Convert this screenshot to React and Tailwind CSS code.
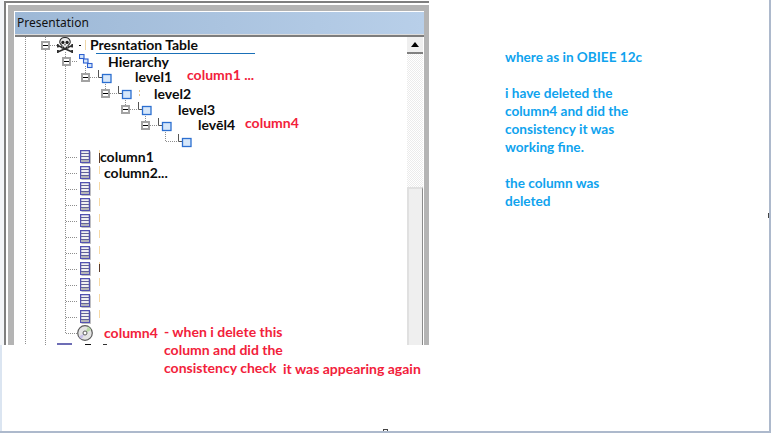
const RED = "text-[#f2213b]";

function Expander() {
  return (
    <span className="flex h-[9px] w-[9px] shrink-0 items-center justify-center border-2 border-[#a3a3a3] bg-white">
      <span className="h-px w-[5px] bg-black" />
    </span>
  );
}

function LevelIcon({ ml = 8 }) {
  return (
    <svg width="14" height="14" viewBox="0 0 14 14" className="shrink-0" style={{ marginLeft: ml }}>
      <path d="M0.5 0V7.5H4" fill="none" stroke="#555" strokeWidth="1" />
      <rect x="4.5" y="4.5" width="8.5" height="8" fill="#d6e7fa" stroke="#2c6fd0" strokeWidth="1.3" />
    </svg>
  );
}

function HierarchyIcon() {
  return (
    <svg width="14" height="15" viewBox="0 0 14 15" className="ml-2 shrink-0">
      {[[0.5, 0.5], [4.5, 5], [8.5, 9.5]].map(([x, y]) => (
        <rect key={x} x={x} y={y} width="4.5" height="4" fill="#d6e7fa" stroke="#2c5fd0" strokeWidth="1.1" />
      ))}
    </svg>
  );
}

function SkullIcon() {
  return (
    <svg width="16" height="16" viewBox="0 0 16 16" className="ml-[7px] shrink-0">
      <path d="M0.8 8.5L15.2 15M15.2 8.5L0.8 15M0.8 7V10.5M15.2 7V10.5M0.8 13V16M15.2 13V16" stroke="#2e2e2e" strokeWidth="1.7" />
      <path d="M8 0.5C4 0.5 2.6 3 2.8 5.4C3 7 4.2 7.8 5 8.6V11H11V8.6C11.8 7.8 13 7 13.2 5.4C13.4 3 12 0.5 8 0.5Z" fill="#ececec" stroke="#2e2e2e" strokeWidth="1.1" />
      <circle cx="5.9" cy="5.4" r="1.6" fill="#1e1e1e" />
      <circle cx="10.1" cy="5.4" r="1.6" fill="#1e1e1e" />
      <path d="M8 7V8.4M6.5 9.5V11M9.5 9.5V11" stroke="#222" strokeWidth="1" />
    </svg>
  );
}

function ColumnIcon() {
  return (
    <svg width="11" height="14" viewBox="0 0 11 14" className="shrink-0">
      <rect x="1.5" y="1.5" width="9.5" height="12.5" fill="#c4c4c4" />
      <rect x="0.6" y="0.6" width="8.8" height="11.8" fill="#f0f0f0" stroke="#5252b0" strokeWidth="1.3" />
      <path d="M1 3.5H9M1 6.5H9M1 9.5H9" stroke="#62629a" strokeWidth="1" />
      <rect x="1.2" y="10" width="7.6" height="1.8" fill="#b4b4b4" />
    </svg>
  );
}

function DiscIcon() {
  return (
    <svg width="16" height="16" viewBox="0 0 16 16" className="shrink-0">
      <circle cx="8" cy="8" r="7.3" fill="#e4e4e4" stroke="#5c5c5c" strokeWidth="1.2" />
      <path d="M8 8L11 1.6A7 7 0 0 1 14.2 5Z" fill="#b9d9a8" />
      <path d="M8 8L4.6 14.2A7 7 0 0 1 2 11.4Z" fill="#c8c0e8" />
      <circle cx="8" cy="8" r="2" fill="#fff" stroke="#5c5c5c" strokeWidth="1" />
    </svg>
  );
}

function Row({ pl, children }) {
  return (
    <div className="flex h-4 shrink-0 items-center" style={{ paddingLeft: pl }}>
      {children}
    </div>
  );
}

function Label({ ml, pt = 0, children }) {
  return (
    <span className="whitespace-nowrap text-[14px] font-bold leading-[14px] text-[#0c0c0c]" style={{ marginLeft: ml, paddingTop: pt }}>
      {children}
    </span>
  );
}

function Connectors() {
  const stubs = [157, 173, 189, 205, 221, 237, 253, 269, 285, 301, 317, 333];
  const dotted = {
    stroke: "#8e8e8e",
    strokeWidth: 1,
    strokeDasharray: "1 1",
    fill: "none",
  };
  return (
    <svg width="391" height="308" viewBox="15 37 391 308" className="absolute left-0 top-0">
      <path d="M25.5 37V345M45.5 37V41M45.5 50V345M65.5 66V333M65.5 52V57" {...dotted} />
      {stubs.map((y) => (
        <path key={y} d={`M66 ${y + 0.5}H78`} {...dotted} />
      ))}
      <path d="M50 45.5H57M70 61.5H78M85.5 66V73M90 77.5H98M110 93.5H118M130 109.5H138M150 125.5H158M105.5 82V89M125.5 98V105M145.5 114V121M165.5 130V141.5H178" {...dotted} />
      <path d="M99.5 150V320" stroke="#f6d9a6" strokeWidth="1" strokeDasharray="8 8" />
      <path d="M99.5 153V163M99.5 264V272" stroke="#5b3a28" strokeWidth="1" />
      <path d="M139.5 90V96" stroke="#e6c48c" strokeWidth="1" strokeDasharray="2 2" />
      <rect x="57" y="343" width="15" height="2" fill="#6d6db5" />
      <path d="M85 344.5H91" stroke="#111" />
      <path d="M103 344.5H107" stroke="#333" />
      <path d="M96 53.5H255" stroke="#1a70b8" />
    </svg>
  );
}

function Tree() {
  return (
    <div className="relative flex-1 overflow-hidden bg-white">
      <Connectors />
      <div className="relative flex h-full flex-col">
        <Row pl={26}>
          <Expander />
          <SkullIcon />
          <span className="ml-[6px] h-px w-[2px] bg-black" />
          <span className="ml-1 h-[10px] w-px bg-[#f0d7a8]" />
          <Label ml={4}>Presntation Table</Label>
        </Row>
        <Row pl={47}>
          <Expander />
          <HierarchyIcon />
          <Label ml={15} pt={1}>Hierarchy</Label>
        </Row>
        <Row pl={66}>
          <Expander />
          <LevelIcon />
          <Label ml={23}>level1</Label>
        </Row>
        <Row pl={86}>
          <Expander />
          <LevelIcon />
          <Label ml={22} pt={2}>level2</Label>
        </Row>
        <Row pl={106}>
          <Expander />
          <LevelIcon />
          <Label ml={26} pt={2}>level3</Label>
        </Row>
        <Row pl={126}>
          <Expander />
          <LevelIcon />
          <Label ml={26}>levēl4</Label>
        </Row>
        <Row pl={163}>
          <LevelIcon ml={0} />
        </Row>
        {["column1", "column2...", "", "", "", "", "", "", "", "", ""].map((t, i) => (
          <Row key={i} pl={65}>
            <ColumnIcon />
            {t && <Label ml={i === 0 ? 9 : 13}>{t}</Label>}
          </Row>
        ))}
        <Row pl={62}>
          <DiscIcon />
        </Row>
      </div>
    </div>
  );
}

function Scrollbar() {
  return (
    <div className="mr-px flex h-full w-4 shrink-0 flex-col">
      <div className="flex h-[17px] shrink-0 items-center justify-center border-b-2 border-[#808080] bg-[#efefef]">
        <span className="h-0 w-0 border-x-[4px] border-b-[5px] border-x-transparent border-b-black" />
      </div>
      <div className="h-[133px] shrink-0 bg-[repeating-conic-gradient(#ebebeb_0_25%,#ffffff_0_50%)] bg-[length:2px_2px]" />
      <div className="flex-1 border-l-2 border-r border-t-2 border-l-[#e0e0e0] border-r-[#8a8a8a] border-t-[#e0e0e0] bg-[#efefef]" />
    </div>
  );
}

function Window() {
  return (
    <div className="mt-px h-[344px] w-[425px] shrink-0 border-l-2 border-t-2 border-[#7f7f7f] bg-white pl-[2px] pt-[2px]">
      <div className="flex h-full flex-col bg-[#b4b4b4] pl-[6px] pr-[5px] pt-[6px]">
        <div className="flex min-h-0 flex-1 flex-col border-l border-t border-white bg-white">
          <div className="flex h-[22px] shrink-0 items-center bg-gradient-to-r from-[#9db8d6] to-[#b8cfe9] pl-[2px] font-['Noto_Sans',sans-serif] text-[12px] text-[#111]">
            Presentation
          </div>
          <div className="h-[3px] shrink-0 border-b-2 border-[#7d7d7d] bg-[#dcdcdc]" />
          <div className="flex min-h-0 flex-1">
            <Tree />
            <Scrollbar />
          </div>
        </div>
      </div>
    </div>
  );
}

function Notes() {
  const lines = [
    "where as in OBIEE 12c",
    "",
    "i have deleted the",
    "column4 and did the",
    "consistency it was",
    "working fine.",
    "",
    "the column was",
    "deleted",
  ];
  return (
    <div className="ml-[76px] pt-12 text-[13.6px] font-bold leading-[18px] text-[#0fa3ee]">
      {lines.map((l, i) => (
        <div key={i} className="h-[18px] whitespace-nowrap">
          {l}
        </div>
      ))}
    </div>
  );
}

function Annotation({ className, children }) {
  return <div className={`absolute whitespace-nowrap text-[14px] font-bold leading-[18px] ${RED} ${className}`}>{children}</div>;
}

export default function App() {
  return (
    <div className="relative h-[433px] w-[771px] overflow-hidden border-b-2 border-r-2 border-[#adb9cc] bg-white font-['Lato',sans-serif]">
      <div className="flex h-[345px]">
        <div className="h-full w-1 shrink-0 bg-[#f4f6f9]" />
        <Window />
        <Notes />
      </div>
      <div className="absolute bottom-0 left-0 top-[345px] w-[2px] bg-[#dbe5f1]" />
      <div className="absolute right-0 top-[213px] h-[5px] w-px bg-[#444]" />
      <div className="absolute bottom-0 left-[383px] h-[2px] w-[5px] border border-b-0 border-[#444]" />
      <Annotation className="left-[187px] top-[66px]">column1 ...</Annotation>
      <Annotation className="left-[245px] top-[114px]">column4</Annotation>
      <Annotation className="left-[104px] top-[324px]">column4</Annotation>
      <Annotation className="left-[164px] top-[323px]">- when i delete this</Annotation>
      <Annotation className="left-[164px] top-[341px]">column and did the</Annotation>
      <Annotation className="left-[164px] top-[359px]">consistency check</Annotation>
      <Annotation className="left-[283px] top-[360px]">it was appearing again</Annotation>
    </div>
  );
}
